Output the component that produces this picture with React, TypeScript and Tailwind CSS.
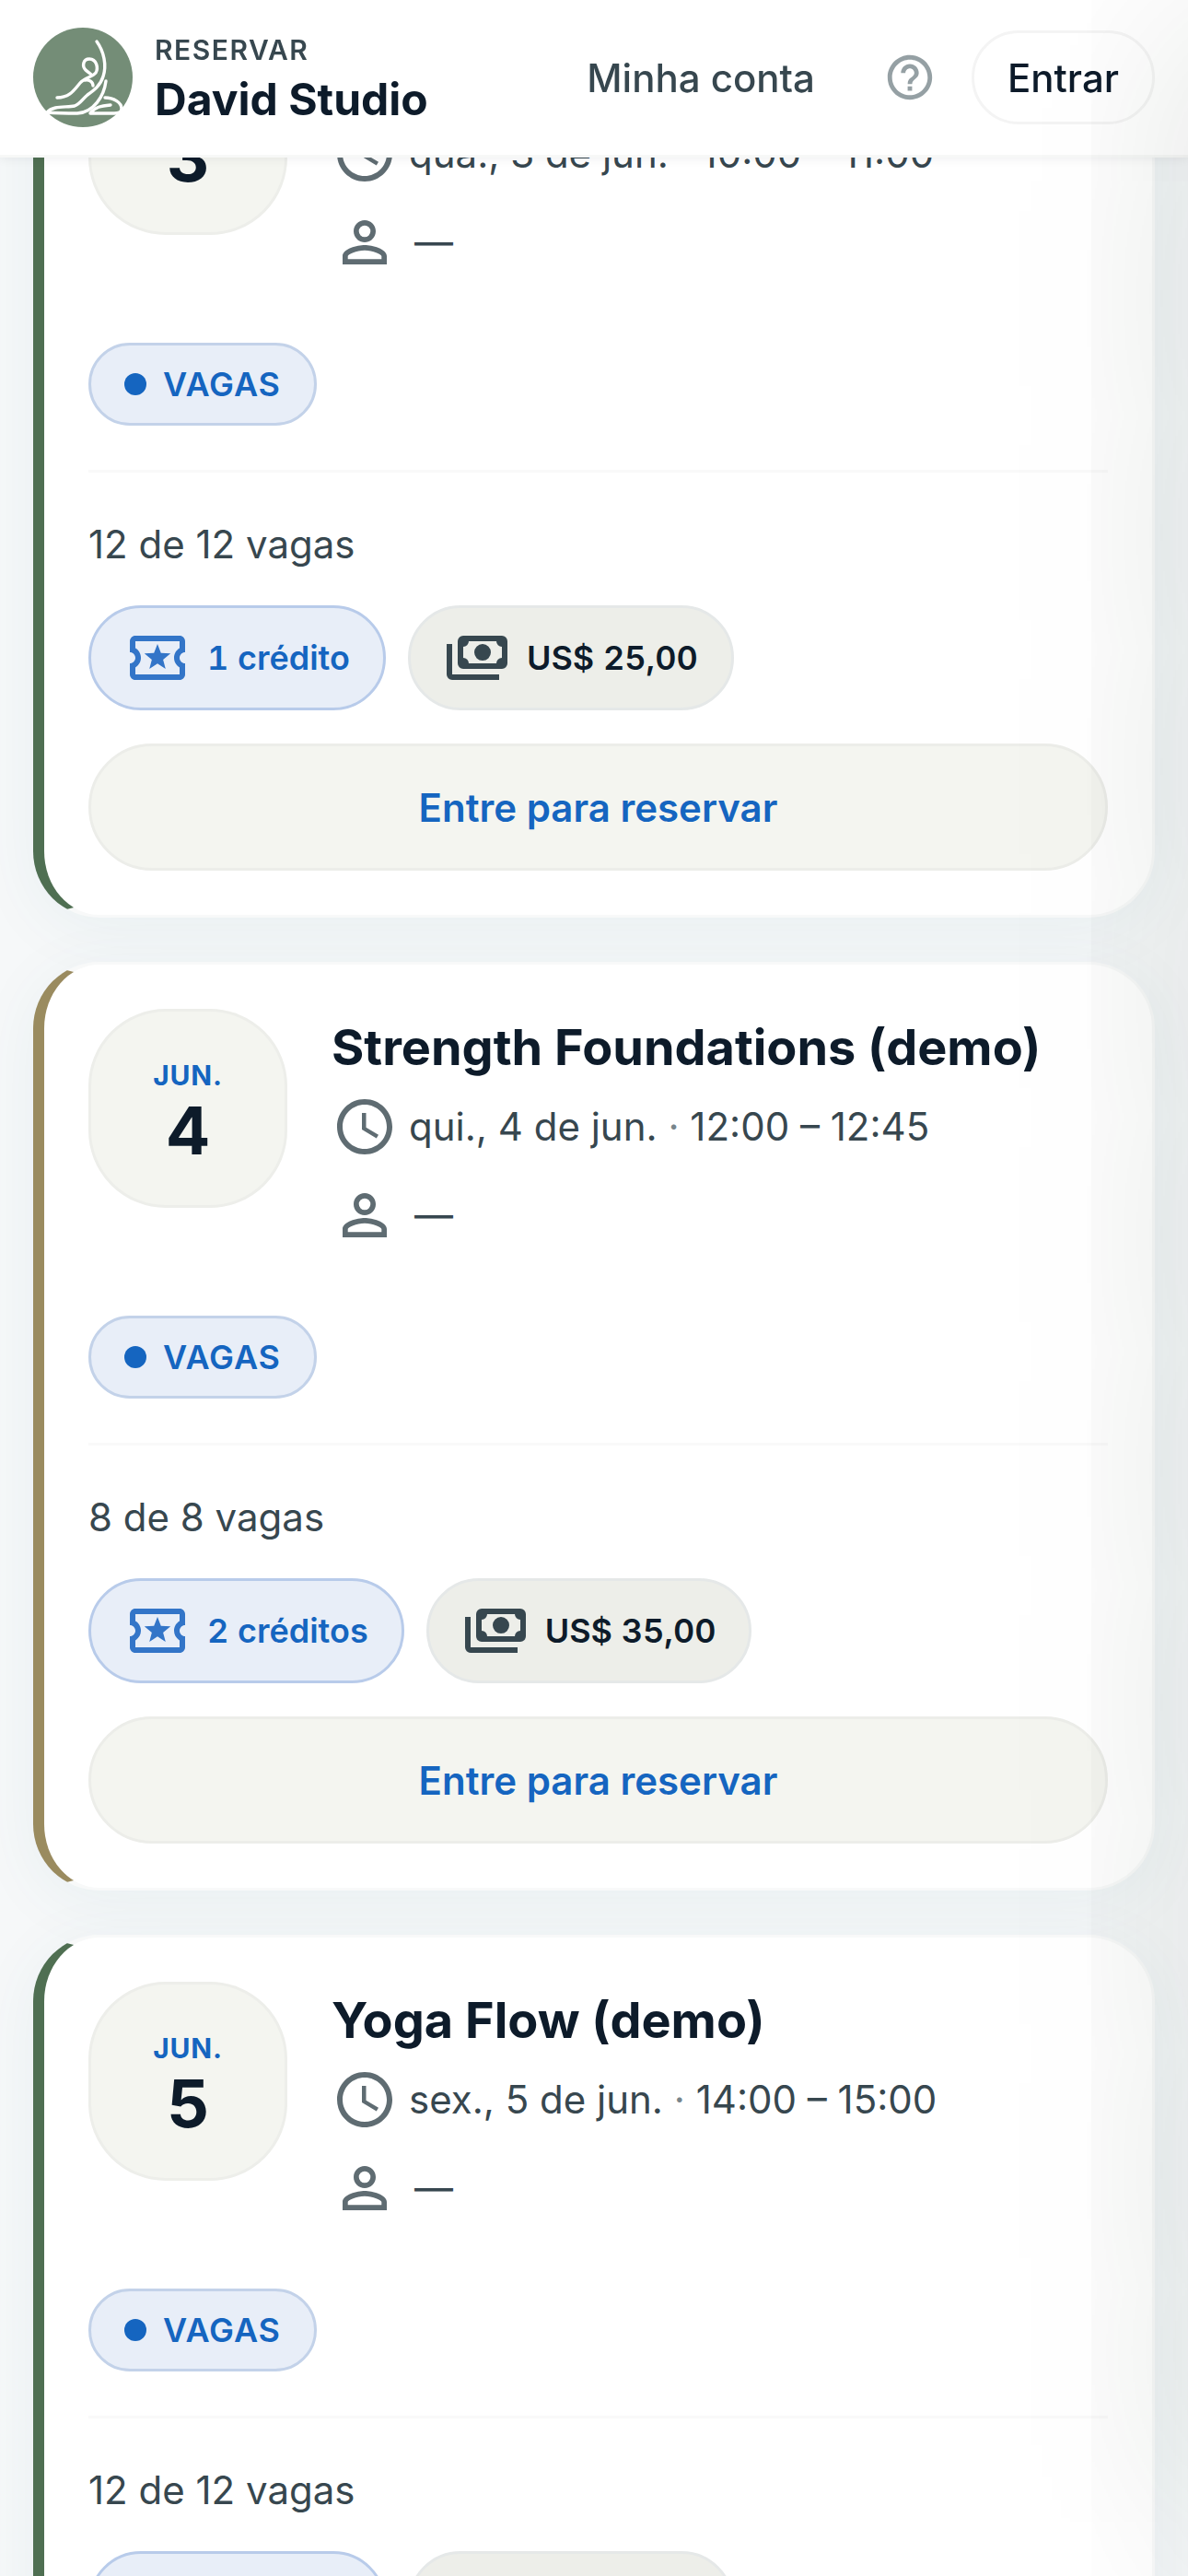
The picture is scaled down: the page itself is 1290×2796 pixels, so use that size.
import * as React from 'react';
import {MdOutlineLocalActivity, MdHelpOutline, MdOutlineSchedule, MdPersonOutline} from 'react-icons/md';

type ClassSession = {
    title: string,
    month: string,
    day: number,
    date: string,
    time: string,
    spots: string,
    credits: string,
    price: string,
    accent: string
}

const sessions: ClassSession[] = [
    {title: 'Yoga Flow (demo)', month: 'JUN.', day: 3, date: 'qua., 3 de jun.', time: '10:00 – 11:00', spots: '12 de 12 vagas', credits: '1 crédito', price: 'US$ 25,00', accent: 'border-l-[#4f6f52]'},
    {title: 'Strength Foundations (demo)', month: 'JUN.', day: 4, date: 'qui., 4 de jun.', time: '12:00 – 12:45', spots: '8 de 8 vagas', credits: '2 créditos', price: 'US$ 35,00', accent: 'border-l-[#9a8b5f]'},
    {title: 'Yoga Flow (demo)', month: 'JUN.', day: 5, date: 'sex., 5 de jun.', time: '14:00 – 15:00', spots: '12 de 12 vagas', credits: '1 crédito', price: 'US$ 25,00', accent: 'border-l-[#4f6f52]'}
];

const StudioLogo = () => (
    <svg viewBox="0 0 108 108" className="size-[108px] shrink-0" aria-hidden="true">
        <circle cx="54" cy="54" r="54" fill="#748d77" />
        <g fill="none" stroke="#fff" strokeWidth="3.4" strokeLinecap="round" strokeLinejoin="round">
            <path d="M69 15C77 26 80 41 76 53C73 63 66 68 59 73C53 78 51 83 45 85C36 87 22 84 15 92C28 93 38 93 48 93C66 92 77 74 79 58" />
            <path d="M26 76C40 76 45 67 51 60C56 54 64 54 68 49C71 44 69 34 61 34C54 34 53 42 57 46C60 49 63 50 64 52" />
            <path d="M56 57C61 56 65 59 65 63" />
            <path d="M78 76C87 76 96 81 96 88C96 92 92 93 88 93H62C67 86 74 85 84 84" />
        </g>
    </svg>
);

const PaymentsIcon = () => (
    <svg viewBox="0 -960 960 960" fill="currentColor" className="size-[72px] text-[#37474f]" aria-hidden="true">
        <path d="M560-440q-50 0-85-35t-35-85q0-50 35-85t85-35q50 0 85 35t35 85q0 50-35 85t-85 35ZM280-320q-33 0-56.5-23.5T200-400v-320q0-33 23.5-56.5T280-800h560q33 0 56.5 23.5T920-720v320q0 33-23.5 56.5T840-320H280Zm80-80h400q0-33 23.5-56.5T840-480v-160q-33 0-56.5-23.5T760-720H360q0 33-23.5 56.5T280-640v160q33 0 56.5 23.5T360-400Zm440 240H120q-33 0-56.5-23.5T40-240v-440h80v440h680v80Z" />
    </svg>
);

const Header = () => (
    <header className="fixed inset-x-0 top-0 z-10 flex h-[171px] items-center justify-between border-b-3 border-[#f7f8f7] bg-white px-9 shadow-[0_3px_9px_rgba(13,27,42,0.05)]">
        <div className="flex items-center gap-6">
            <StudioLogo />
            <div className="pt-3">
                <p className="text-[30px] leading-9 font-semibold tracking-wider text-[#37474f]">RESERVAR</p>
                <h1 className="text-[48px] leading-[72px] font-bold">David Studio</h1>
            </div>
        </div>
        <nav className="flex items-center">
            <a href="#conta" className="text-[42px] font-medium text-[#37474f]">Minha conta</a>
            <button type="button" aria-label="Ajuda" className="mr-9 ml-[72px] p-0.5">
                <MdHelpOutline className="size-[58px] text-[#95a0a4]" />
            </button>
            <button type="button" className="h-[102px] rounded-full border-3 border-[#f4f4f4] px-9 text-[42px] font-medium">Entrar</button>
        </nav>
    </header>
);

const SessionCard = ({data}: {data: ClassSession}) => {

    const {title, month, day, date, time, spots, credits, price, accent} = data;

return (
    <article className={`rounded-[72px] border-3 border-l-12 border-[#f8f9f9] bg-white p-12 shadow-[0_12px_72px_rgba(10,100,120,0.06)] ${accent}`}>
        <div className="flex gap-12">
            <div className="flex size-[216px] shrink-0 flex-col items-center justify-center rounded-[84px] border-3 border-[#edeeea] bg-[#f4f5f0] pt-3">
                <span className="text-[30px] leading-9 font-bold tracking-wide text-[#1565c0]">{month}</span>
                <span className="text-[72px] leading-[84px] font-bold">{day}</span>
            </div>
            <div className="min-w-0 flex-1">
                <h2 className="text-[54px] leading-[84px] font-bold">{title}</h2>
                <p className="mt-2 flex items-center gap-3 text-[42px] leading-[72px] text-[#37474f]">
                    <MdOutlineSchedule className="size-[72px] text-[#5f6c72]" />
                    <span>{date} <span className="text-[#78858b]">·</span> {time}</span>
                </p>
                <p className="mt-6 flex items-center gap-[18px] text-[42px] leading-[72px] text-[#37474f]">
                    <MdPersonOutline className="size-[72px] text-[#5f6c72]" />
                    <span>—</span>
                </p>
            </div>
        </div>
        <div className="mt-[73px] flex">
            <span className="flex h-[90px] items-center gap-[18px] rounded-full border-3 border-[#c3d2e9] bg-[#e8eef8] px-9 text-[36px] font-semibold tracking-wide text-[#1565c0]">
                <span className="size-6 rounded-full bg-[#1565c0]" />
                VAGAS
            </span>
        </div>
        <div className="mt-12 border-t-3 border-[#f9f9f9] pt-12">
            <p className="text-[42px] leading-[60px] text-[#37474f]">{spots}</p>
            <div className="mt-9 flex gap-6 text-[36px] font-semibold tabular-nums">
                <span className="flex h-[114px] items-center gap-[18px] rounded-full border-3 border-[#b8cbea] bg-[#e8eef8] px-9 text-[#1565c0]">
                    <MdOutlineLocalActivity className="size-[72px] text-[#3375c8]" />
                    {credits}
                </span>
                <span className="flex h-[114px] items-center gap-[18px] rounded-full border-3 border-[#e5e8e8] bg-[#edeee9] px-9">
                    <PaymentsIcon />
                    {price}
                </span>
            </div>
            <button type="button" className="mt-9 h-[138px] w-full rounded-full border-3 border-[#ecede9] bg-[#f4f5f0] text-[42px] font-semibold text-[#1565c0]">Entre para reservar</button>
        </div>
    </article>
)

};

const App = () => {
return (
    <div className="h-screen overflow-hidden bg-[#f6f8f9] font-['Inter',sans-serif] text-[#0d1b2a]">
        <Header />
        <main className="-mt-3 flex flex-col gap-12 px-9">
            {sessions.map((session) => <SessionCard key={session.day} data={session} />)}
        </main>
        {/* closed drawer, only its shadow reaches into the window */}
        <aside aria-hidden="true" className="pointer-events-none fixed inset-y-12 left-full z-20 w-96 shadow-[0_0_240px_rgba(20,35,20,0.15)]" />
    </div>
)

};

export default App;
